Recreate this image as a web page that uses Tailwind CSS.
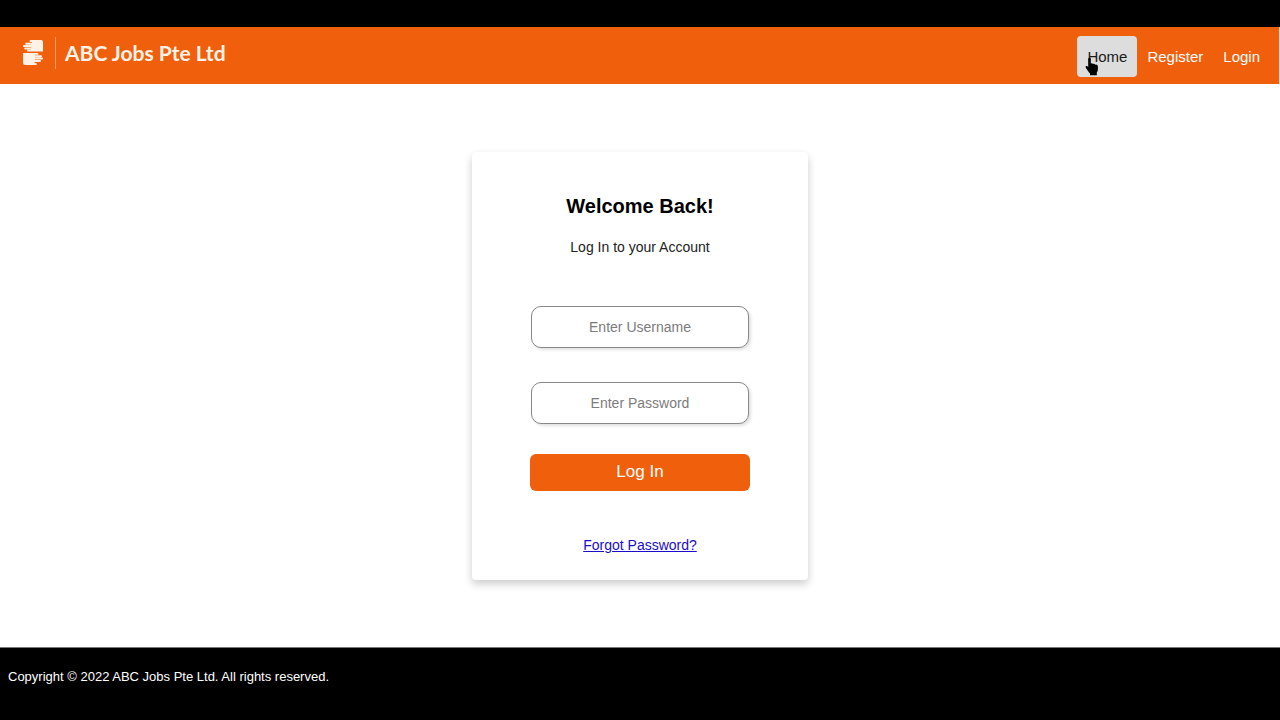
<!DOCTYPE html>
<html lang="en">
<head>
<meta charset="utf-8">
<meta name="viewport" content="width=device-width, initial-scale=1">
<title>ABC Jobs Pte Ltd</title>
<script src="https://cdn.jsdelivr.net/npm/@tailwindcss/browser@4"></script>
</head>
<body class="flex min-h-screen flex-col border-t-[27px] border-black bg-white font-['Liberation_Sans',Arial,sans-serif] text-sm text-black">
<header class="flex h-[57px] items-center justify-between border-r border-[#fbe3d3] bg-[#ef5f0c] pr-[9px] pl-[22px]">
  <a href="#" class="mb-1.5 flex items-center text-[#fff3e8]">
    <svg class="h-[27px] w-[22px]" viewBox="0 0 22 27" fill="currentColor" aria-hidden="true">
      <path d="M8.500 1H19Q21 1 21 3V12.6H6Q5 12.6 5 11.700T6 10.800H9V10.500H3.200Q2.200 10.500 2.200 9.500T3.200 8.500H9V8.100H2Q1 8.100 1 7.100T2 6.100H9V5.700H4.200Q3.200 5.700 3.200 4.700T4.200 3.700H10V3H8.500Q7.500 3 7.500 2T8.500 1Z"/>
      <path d="M1 14H15.500Q16.500 14 16.500 14.900T15.500 15.800H13V16.200H19Q20 16.200 20 17.200T19 18.200H13V18.600H20Q21 18.600 21 19.600T20 20.600H13V21H18Q19 21 19 22T18 23H12.500V24Q15 24 15 25T13.500 26H3Q1 26 1 24Z"/>
    </svg>
    <span class="ml-[11px] h-8 w-px bg-[#f6a06a]"></span>
    <span class="ml-[9px] font-['Lato',sans-serif] text-[21px] leading-7 font-bold">ABC Jobs Pte Ltd</span>
  </a>
  <nav class="relative mt-0.5 flex text-[15px] text-white">
    <a href="#" class="rounded bg-[#dddddd] px-2.5 py-2 leading-[25px] text-[#1a1a1a]">Home</a>
    <a href="#" class="px-2.5 py-2 leading-[25px]">Register</a>
    <a href="#" class="px-2.5 py-2 leading-[25px]">Login</a>
    <svg class="absolute top-[21px] left-2 h-[19px] w-[15px]" viewBox="0 0 15 19" aria-hidden="true">
      <path fill="#000" d="M3.2 2Q3.2.8 4.5.8T5.8 2V6.6Q7.3 5.9 8 7Q9.6 6.4 10.2 7.7Q12.7 7.2 12.9 9.6V12.2Q12.9 14 11.8 15.6V18.3H5V16.4Q3.8 15.5 2.8 13.7L.7 10.6Q.2 9.4 1.2 9T3.2 10.1Z"/>
    </svg>
  </nav>
</header>
<main class="flex flex-1 items-start justify-center pt-[68px] pb-[67px]">
  <form class="flex w-[336px] flex-col items-center rounded px-[58px] pt-10 pb-[25px] text-center shadow-[0_4px_8px_0_rgba(0,0,0,0.2)]">
    <h1 class="text-xl leading-7 font-bold">Welcome Back!</h1>
    <p class="mt-[17px] leading-5 text-[#222]">Log In to your Account</p>
    <input type="text" aria-label="Username" placeholder="Enter Username" class="mt-[49px] h-[42px] w-[218px] rounded-[10px] border border-[#888] bg-white text-center shadow-[2px_2px_3px_rgba(0,0,0,0.12)] placeholder:text-[#7c7c7c]">
    <input type="password" aria-label="Password" placeholder="Enter Password" class="mt-[34px] h-[42px] w-[218px] rounded-[10px] border border-[#888] bg-white text-center shadow-[2px_2px_3px_rgba(0,0,0,0.12)] placeholder:text-[#7c7c7c]">
    <button type="submit" class="mt-[30px] h-[37px] w-full rounded-md bg-[#ef5f0c] text-[17px] text-white">Log In</button>
    <a href="#" class="mt-11 leading-5 text-[#1a0dcc] underline">Forgot Password?</a>
  </form>
</main>
<footer class="h-[73px] border-t border-[#777] bg-black px-2 pt-[19px] text-[13px] leading-5 text-white">Copyright © 2022 ABC Jobs Pte Ltd. All rights reserved.</footer>
</body>
</html>
